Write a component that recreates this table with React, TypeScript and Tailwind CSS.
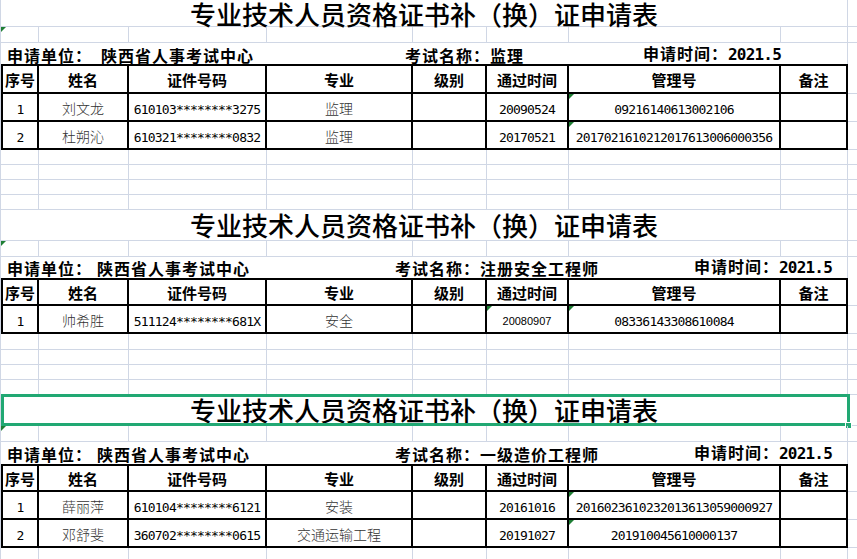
import React from 'react';

const W = ['w-[38px]', 'w-[90px]', 'w-[138px]', 'w-[146px]', 'w-[74px]', 'w-[82px]', 'w-[212px]', 'w-[67px]'];
const TITLE = '专业技术人员资格证书补（换）证申请表';
const HEADERS = ['序号', '姓名', '证件号码', '专业', '级别', '通过时间', '管理号', '备注'];

type Cell = { t?: string; k?: 'num' | 'cjk' | 'arial'; tri?: boolean };

function Tri() {
  return (
    <span className="absolute left-0 top-0 h-0 w-0 border-t-[5px] border-r-[5px] border-t-[#1e7e34] border-r-transparent" />
  );
}

function EmptyRow({ h, tri }: { h: string; tri?: boolean }) {
  return (
    <div className={`flex ${h} border-b border-l border-[#d0d7e5]`}>
      {W.map((w, i) => (
        <div key={i} className={`relative shrink-0 ${w} border-r border-[#d0d7e5]`}>
          {tri && i === 0 ? <Tri /> : null}
        </div>
      ))}
      <div className="flex-1" />
    </div>
  );
}

function TitleRow({ h, pb, lead, selected }: { h: string; pb: string; lead: string; selected?: boolean }) {
  return (
    <div className={`relative flex ${h} border-b border-l border-[#d0d7e5]`}>
      <div className={`flex w-[847px] shrink-0 items-end justify-center border-r border-[#d0d7e5] ${pb}`}>
        <span className={`whitespace-nowrap text-[26px] font-medium ${lead} text-black`}>{TITLE}</span>
      </div>
      <div className="flex-1" />
      {selected ? (
        <>
          <div className="pointer-events-none absolute left-0 top-[-1px] h-[32px] w-[849px] border-[3px] border-[#21a873]" />
          <div className="absolute left-[844px] top-[27px] h-[7px] w-[7px] border border-white bg-[#21a873]" />
        </>
      ) : null}
    </div>
  );
}

function InfoRow({
  h,
  pb,
  w1,
  w2,
  w3,
  exam,
}: {
  h: string;
  pb: string;
  w1: string;
  w2: string;
  w3: string;
  exam: string;
}) {
  return (
    <div className={`flex ${h} border-l border-[#d0d7e5]`}>
      <div
        className={`flex w-[847px] shrink-0 items-end whitespace-nowrap border-r border-[#d0d7e5] pl-[6px] ${pb} text-[16px] font-bold leading-[16px] tracking-[1px] text-black`}
      >
        <span className={`shrink-0 ${w1}`}>申请单位：</span>
        <span className={`shrink-0 ${w2}`}>陕西省人事考试中心</span>
        <span className={`shrink-0 ${w3}`}>考试名称：{exam}</span>
        <span className="shrink-0">
          申请时间：
          <span className="font-['DejaVu_Sans_Mono',monospace] tracking-[-0.8px]">2021.5</span>
        </span>
      </div>
      <div className="flex-1" />
    </div>
  );
}

function HeaderRow({ h }: { h: string }) {
  return (
    <div className={`flex ${h} border-l border-[#d0d7e5]`}>
      {HEADERS.map((t, i) => (
        <div
          key={i}
          className={`flex shrink-0 items-center justify-center border-b-2 border-r-2 border-t-2 border-black pt-[1px] ${W[i]} ${
            i === 0 ? 'border-l-2' : ''
          }`}
        >
          <span className="whitespace-nowrap text-[15px] font-bold leading-[15px] text-black">{t}</span>
        </div>
      ))}
      <div className="flex-1 border-b border-[#d0d7e5]" />
    </div>
  );
}

function CellText({ c }: { c: Cell }) {
  if (!c.t) return null;
  if (c.k === 'cjk')
    return <span className="whitespace-nowrap text-[14px] font-light leading-[14px] text-[#333]">{c.t}</span>;
  if (c.k === 'arial')
    return (
      <span className="mt-[2px] whitespace-nowrap font-['Liberation_Sans',Arial,sans-serif] text-[11px] leading-[11px] text-black">
        {c.t}
      </span>
    );
  return (
    <span className="mt-[2px] whitespace-nowrap font-['DejaVu_Sans_Mono',monospace] text-[13px] leading-[13px] tracking-[-0.8px] text-black">
      {c.t}
    </span>
  );
}

function DataRow({ h, cells }: { h: string; cells: Cell[] }) {
  return (
    <div className={`flex ${h} border-l border-[#d0d7e5]`}>
      {cells.map((c, i) => (
        <div
          key={i}
          className={`relative flex shrink-0 items-center justify-center border-b-2 border-r-2 border-black pt-[2px] ${W[i]} ${
            i === 0 ? 'border-l-2' : ''
          }`}
        >
          {c.tri ? <Tri /> : null}
          <CellText c={c} />
        </div>
      ))}
      <div className="flex-1 border-b border-[#d0d7e5]" />
    </div>
  );
}

const n = (t: string, tri?: boolean): Cell => ({ t, k: 'num', tri });
const z = (t: string): Cell => ({ t, k: 'cjk' });
const e: Cell = {};

export default function App() {
  return (
    <div className="h-[559px] w-[857px] overflow-hidden bg-white font-['Noto_Sans_CJK_SC',sans-serif]">
      {/* Block 1 */}
      <TitleRow h="h-[27px]" pb="pb-0" lead="leading-[24px]" />
      <EmptyRow h="h-[16px]" tri />
      <InfoRow h="h-[21px]" pb="pb-[1px]" w1="w-[94px]" w2="w-[304px]" w3="w-[238px]" exam="监理" />
      <HeaderRow h="h-[30px]" />
      <DataRow
        h="h-[28px]"
        cells={[n('1'), z('刘文龙'), n('610103********3275'), z('监理'), e, n('20090524'), n('09216140613002106', true), e]}
      />
      <DataRow
        h="h-[28px]"
        cells={[
          n('2'),
          z('杜朔沁'),
          n('610321********0832'),
          z('监理'),
          e,
          n('20170521'),
          n('2017021610212017613006000356', true),
          e,
        ]}
      />
      <EmptyRow h="h-[15px]" />
      <EmptyRow h="h-[15px]" />
      <EmptyRow h="h-[15px]" />
      <EmptyRow h="h-[15px]" />

      {/* Block 2 */}
      <TitleRow h="h-[31px]" pb="pb-[2px]" lead="leading-[26px]" />
      <EmptyRow h="h-[16px]" tri />
      <InfoRow h="h-[21px]" pb="pb-[2px]" w1="w-[90px]" w2="w-[298px]" w3="w-[299px]" exam="注册安全工程师" />
      <HeaderRow h="h-[28px]" />
      <DataRow
        h="h-[28px]"
        cells={[
          n('1'),
          z('帅希胜'),
          n('511124********681X'),
          z('安全'),
          e,
          { t: '20080907', k: 'arial', tri: true },
          n('08336143308610084', true),
          e,
        ]}
      />
      <EmptyRow h="h-[16px]" />
      <EmptyRow h="h-[15px]" />
      <EmptyRow h="h-[15px]" />
      <EmptyRow h="h-[15px]" />

      {/* Block 3 */}
      <TitleRow h="h-[31px]" pb="pb-[2px]" lead="leading-[26px]" selected />
      <EmptyRow h="h-[16px]" tri />
      <InfoRow h="h-[22px]" pb="pb-[2px]" w1="w-[90px]" w2="w-[298px]" w3="w-[299px]" exam="一级造价工程师" />
      <HeaderRow h="h-[28px]" />
      <DataRow
        h="h-[28px]"
        cells={[
          n('1'),
          z('薛丽萍'),
          n('610104********6121'),
          z('安装'),
          e,
          n('20161016'),
          n('2016023610232013613059000927', true),
          e,
        ]}
      />
      <DataRow
        h="h-[28px]"
        cells={[
          n('2'),
          z('邓舒斐'),
          n('360702********0615'),
          z('交通运输工程'),
          e,
          n('20191027'),
          n('201910045610000137', true),
          e,
        ]}
      />
      <EmptyRow h="h-[15px]" />
    </div>
  );
}
